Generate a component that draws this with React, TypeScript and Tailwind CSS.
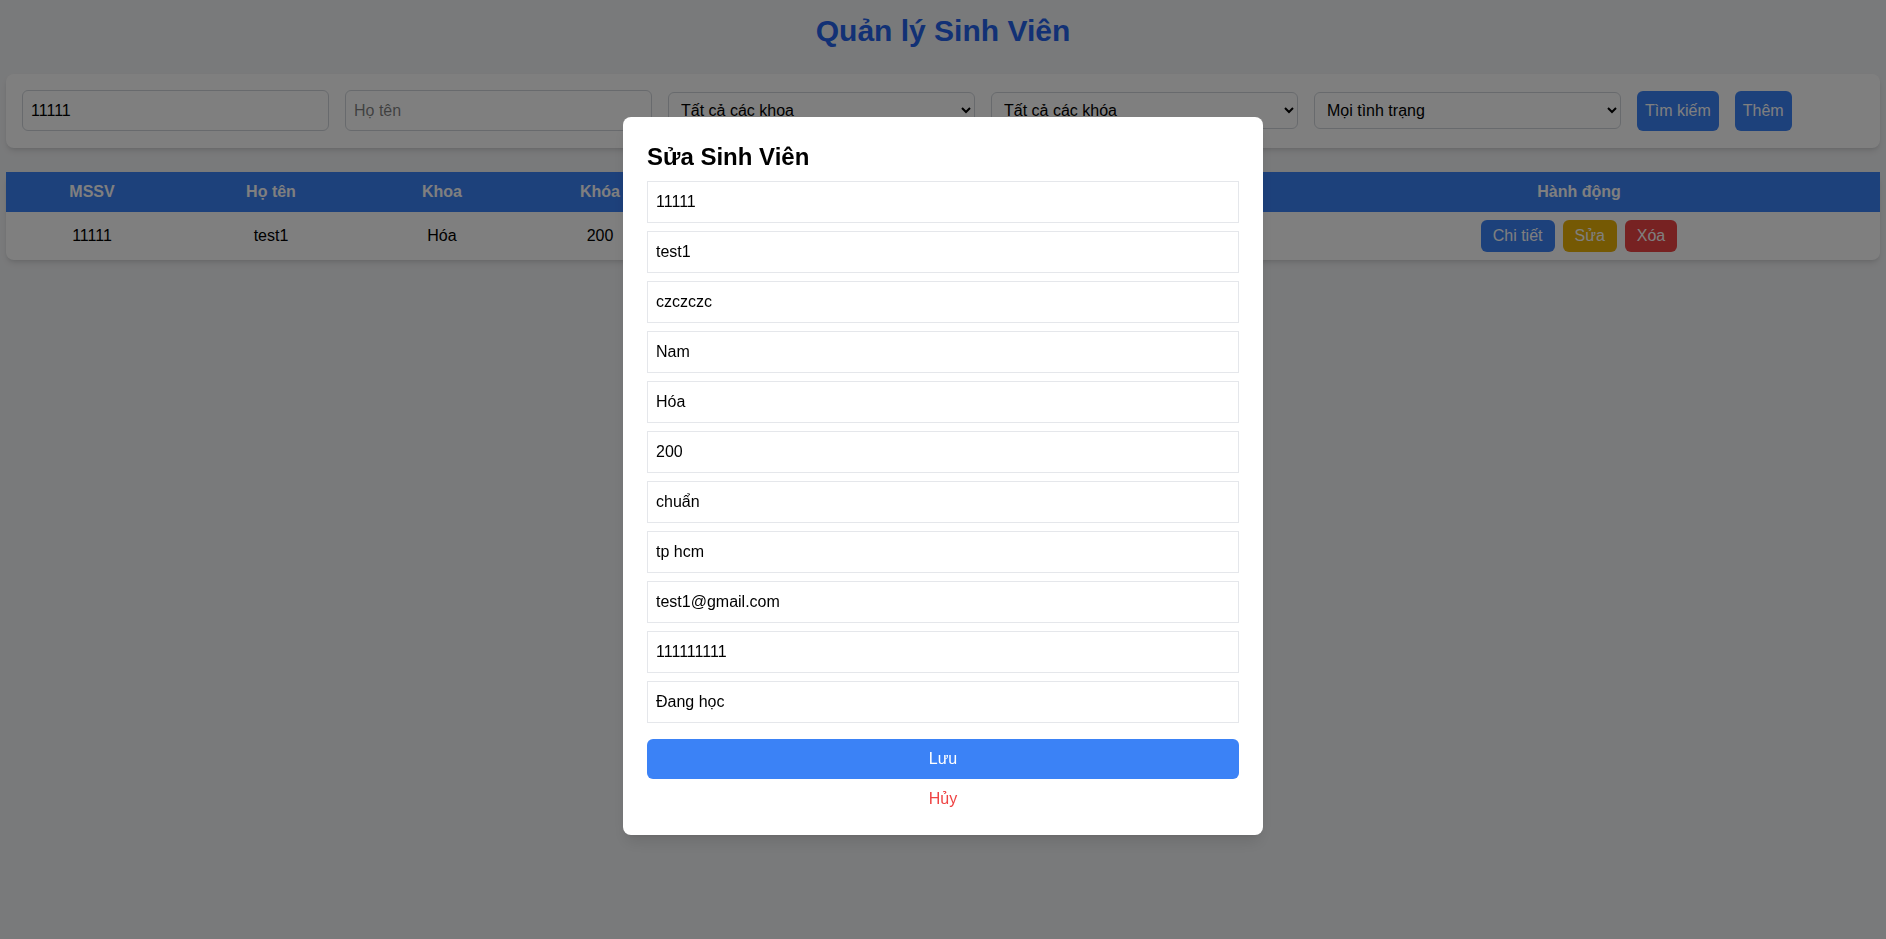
import React, { useState } from 'react';

type Student = {
  mssv: string;
  hoTen: string;
  khoa: string;
  khoaHoc: string;
  chuongTrinh: string;
  email: string;
  tinhTrang: string;
};

const students: Student[] = [
  {
    mssv: '11111',
    hoTen: 'test1',
    khoa: 'Hóa',
    khoaHoc: '200',
    chuongTrinh: 'chuẩn',
    email: 'test1@gmail.com',
    tinhTrang: 'Đang học',
  },
];

// values shown in the edit form
const editFields = [
  '11111',
  'test1',
  'czczczc',
  'Nam',
  'Hóa',
  '200',
  'chuẩn',
  'tp hcm',
  'test1@gmail.com',
  '111111111',
  'Đang học',
];

const FilterBar: React.FC = () => {
  return (
    <div className="bg-white rounded-lg shadow-md px-4 pt-4 pb-[17px] flex flex-row items-center gap-4">
      <input
        className="w-[307px] border border-[#d1d5db] rounded-md p-2 h-[41px]"
        defaultValue="11111"
      />
      <input className="w-[307px] border border-[#d1d5db] rounded-md p-2 h-[41px]" placeholder="Họ tên" />
      <select className="w-[307px] border border-[#d1d5db] rounded-md p-2" defaultValue="all">
        <option value="all">Tất cả các khoa</option>
      </select>
      <select className="w-[307px] border border-[#d1d5db] rounded-md p-2" defaultValue="all">
        <option value="all">Tất cả các khóa</option>
      </select>
      <select className="w-[307px] border border-[#d1d5db] rounded-md p-2" defaultValue="all">
        <option value="all">Mọi tình trạng</option>
      </select>
      <button className="bg-[#3b82f6] text-white px-2 py-2 rounded-md">Tìm kiếm</button>
      <button className="bg-[#3b82f6] text-white px-2 py-2 rounded-md">Thêm</button>
    </div>
  );
};

const StudentTable: React.FC = () => {
  return (
    <div className="bg-white rounded-lg shadow-md mt-6">
      <table className="w-full table-fixed border-collapse">
        <thead>
          <tr className="bg-[#3b82f6] text-white">
            <th className="w-[172px] py-2 font-bold">MSSV</th>
            <th className="w-[186px] py-2 font-bold">Họ tên</th>
            <th className="w-[156px] py-2 font-bold">Khoa</th>
            <th className="w-[160px] py-2 font-bold">Khóa</th>
            <th className="w-[180px] py-2 font-bold">Chương trình</th>
            <th className="w-[238px] py-2 font-bold">Email</th>
            <th className="w-[180px] py-2 font-bold">Tình trạng</th>
            <th className="py-2 font-bold">Hành động</th>
          </tr>
        </thead>
        <tbody>
          {students.map((s) => (
            <tr key={s.mssv} className="text-center">
              <td className="py-2">{s.mssv}</td>
              <td className="py-2">{s.hoTen}</td>
              <td className="py-2">{s.khoa}</td>
              <td className="py-2">{s.khoaHoc}</td>
              <td className="py-2">{s.chuongTrinh}</td>
              <td className="py-2">{s.email}</td>
              <td className="py-2">{s.tinhTrang}</td>
              <td className="py-2">
                <div className="flex flex-row justify-center gap-2">
                  <button className="bg-[#3b82f6] text-white px-3 py-1 rounded-md">Chi tiết</button>
                  <button className="bg-[#eab308] text-white px-3 py-1 rounded-md">Sửa</button>
                  <button className="bg-[#ef4444] text-white px-3 py-1 rounded-md">Xóa</button>
                </div>
              </td>
            </tr>
          ))}
        </tbody>
      </table>
    </div>
  );
};

const EditModal: React.FC<{ onClose: () => void }> = ({ onClose }) => {
  return (
    <div className="fixed inset-0 bg-black/50 flex justify-center items-start pt-[117px]">
      <div className="w-[640px] bg-white rounded-lg shadow-lg p-6">
        <h2 className="text-2xl font-bold text-black mb-2">Sửa Sinh Viên</h2>
        <div className="flex flex-col gap-2">
          {editFields.map((v, i) => (
            <input key={i} className="w-full border border-[#e5e7eb] p-2 text-black" defaultValue={v} />
          ))}
        </div>
        <button className="w-full mt-4 bg-[#3b82f6] text-white font-medium py-2 rounded-md">Lưu</button>
        <button className="w-full mt-2 text-[#ef4444]" onClick={onClose}>
          Hủy
        </button>
      </div>
    </div>
  );
};

export default function App() {
  const [editing, setEditing] = useState(true);

  return (
    <div className="min-h-screen bg-[#f3f4f6] px-[6px] font-['Liberation_Sans',Arial,sans-serif] text-base text-black">
      <h1 className="text-3xl font-bold text-[#2563eb] text-center pt-[13px] pb-[25px] leading-9">
        Quản lý Sinh Viên
      </h1>
      <FilterBar />
      <StudentTable />
      {editing && <EditModal onClose={() => setEditing(false)} />}
    </div>
  );
}
